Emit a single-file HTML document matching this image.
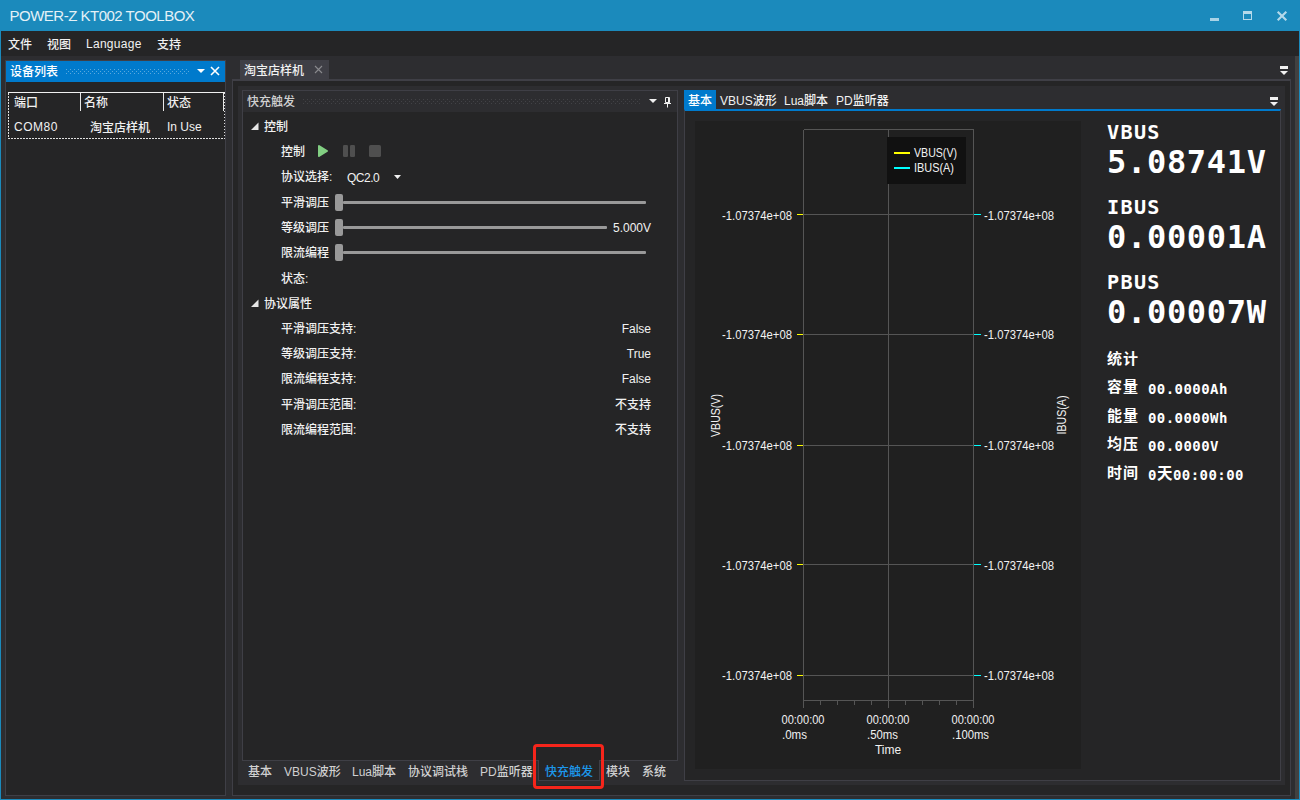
<!DOCTYPE html>
<html lang="zh-CN">
<head>
<meta charset="utf-8">
<title>POWER-Z KT002 TOOLBOX</title>
<style>
*{box-sizing:border-box;margin:0;padding:0}
html,body{width:1300px;height:800px;overflow:hidden;background:#2d2d30}
body{position:relative;font-family:"Liberation Sans","Noto Sans CJK SC",sans-serif;font-size:12px;color:#f1f1f1;line-height:16px;font-weight:500}
.abs{position:absolute}
.t{position:absolute;white-space:nowrap;line-height:16px;height:16px}
.mono{font-family:"DejaVu Sans Mono","Liberation Mono","Noto Sans CJK SC",monospace;font-weight:bold;color:#fff}
#title{left:0;top:0;width:1300px;height:31px;background:#1b8abc}
#menubar{left:1px;top:31px;width:1298px;height:25px;background:#252526}
.bl{background:#1b8abc}
.bd{background:#3f3f46}
.dk{background:#252526}
</style>
</head>
<body>
<!-- window frame -->
<div class="abs" id="title"></div>
<div class="abs bl" style="left:0;top:0;width:1px;height:800px"></div>
<div class="abs bl" style="left:1299px;top:0;width:1px;height:800px"></div>
<div class="abs bl" style="left:0;top:799px;width:1300px;height:1px"></div>
<div class="abs" id="menubar"></div>
<div class="abs" style="left:1295px;top:56px;width:4px;height:743px;background:#414141"></div>

<div class="t" id="ttl" style="left:9.5px;font-weight:400;top:7px;font-size:15px;line-height:18px;height:18px;color:#e4f1f7;letter-spacing:-0.5px">POWER-Z KT002 TOOLBOX</div>
<!-- window buttons -->
<svg class="abs" style="left:1200px;top:0" width="100" height="31" viewBox="0 0 100 31">
  <rect x="10" y="18" width="9" height="3" fill="#a9d3e6"/>
  <rect x="43.5" y="11.5" width="8" height="8" fill="none" stroke="#b4d9ea" stroke-width="1"/>
  <rect x="43" y="11" width="9" height="3" fill="#b4d9ea"/>
  <path d="M77.7 11.7 L86.3 20.3 M86.3 11.7 L77.7 20.3" stroke="#b4d9ea" stroke-width="2.1" fill="none"/>
</svg>

<!-- menu -->
<div class="t" style="left:8px;top:37px">文件</div>
<div class="t" style="left:47px;top:37px">视图</div>
<div class="t" style="left:86px;top:36px;letter-spacing:0.28px" id="mlang">Language</div>
<div class="t" style="left:157px;top:37px">支持</div>

<!-- LEFT PANEL -->
<div class="abs" style="left:5px;top:60px;width:221px;height:736px;background:#252526;border:1px solid #3f3f46"></div>
<div class="abs" style="left:6px;top:61px;width:219px;height:21px;background:#007acc"></div>
<div class="t" style="left:10px;top:64px;color:#fff">设备列表</div>
<svg class="abs" style="left:66px;top:69px" width="124" height="5">
  <defs><pattern id="dp1" width="4" height="4" patternUnits="userSpaceOnUse"><rect x="0" y="0" width="1" height="1" fill="#59a8de"/><rect x="2" y="2" width="1" height="1" fill="#59a8de"/></pattern></defs>
  <rect width="124" height="5" fill="url(#dp1)"/>
</svg>
<svg class="abs" style="left:195px;top:64px" width="30" height="16" viewBox="0 0 30 16">
  <path d="M2 5 H10 L6 9 Z" fill="#fff"/>
  <path d="M16 3 L24 11 M24 3 L16 11" stroke="#fff" stroke-width="1.6" fill="none"/>
</svg>
<!-- table -->
<svg class="abs" style="left:8px;top:92px" width="217" height="47" viewBox="0 0 217 47"><path d="M0.5 1 V46.5 H216.5 V1" fill="none" stroke="#e0e0e0" stroke-width="1" stroke-dasharray="1.5 1.5" shape-rendering="crispEdges"/></svg>
<div class="abs" style="left:8px;top:92px;width:217px;height:1px;background:#f1f1f1"></div>
<div class="abs" style="left:80px;top:93px;width:1px;height:18px;background:#e8e8e8"></div>
<div class="abs" style="left:163px;top:93px;width:1px;height:18px;background:#e8e8e8"></div>
<div class="abs" style="left:223px;top:93px;width:1px;height:18px;background:#e8e8e8"></div>
<div class="t" style="left:14px;top:95px">端口</div>
<div class="t" style="left:84px;top:95px">名称</div>
<div class="t" style="left:167px;top:95px">状态</div>
<div class="t" style="left:14px;top:119px;letter-spacing:0.5px">COM80</div>
<div class="t" style="left:90px;top:120px">淘宝店样机</div>
<div class="t" style="left:167px;top:119px">In Use</div>

<!-- DOCUMENT AREA -->
<div class="abs" style="left:240px;top:60px;width:89px;height:20px;background:#3f3f46"></div>
<div class="t" style="left:244px;top:63px">淘宝店样机</div>
<svg class="abs" style="left:312px;top:63px" width="14" height="14" viewBox="0 0 14 14"><path d="M3 3 L10 10 M10 3 L3 10" stroke="#8a8a8e" stroke-width="1.1" fill="none"/></svg>
<svg class="abs" style="left:1279px;top:65px" width="11" height="12" viewBox="0 0 11 12"><rect x="1" y="1" width="8" height="3" fill="#f1f1f1"/><path d="M1 6 H9 L5 10 Z" fill="#f1f1f1"/></svg>
<div class="abs" style="left:232px;top:79px;width:1059px;height:717px;background:#252526;border:1px solid #3f3f46;border-top-width:2px"></div>
<div class="abs" style="left:238px;top:86px;width:1047px;height:699px;background:#2d2d30"></div>

<!-- QUICK CHARGE PANEL -->
<div class="abs" style="left:242px;top:90px;width:436px;height:671px;background:#252526;border:1px solid #3f3f46"></div>
<div class="abs" style="left:243px;top:91px;width:434px;height:21px;background:#2d2d30"></div>
<div class="t" style="left:247px;top:94px;color:#d0d0d0">快充触发</div>
<svg class="abs" style="left:303px;top:99px" width="338" height="5">
  <defs><pattern id="dp2" width="4" height="4" patternUnits="userSpaceOnUse"><rect x="0" y="0" width="1" height="1" fill="#424246"/><rect x="2" y="2" width="1" height="1" fill="#424246"/></pattern></defs>
  <rect width="338" height="5" fill="url(#dp2)"/>
</svg>
<svg class="abs" style="left:647px;top:94px" width="28" height="16" viewBox="0 0 28 16">
  <path d="M2 5 H10 L6 9 Z" fill="#f1f1f1"/>
  <path d="M18.5 3.5 H22.5 V8.5 H18.5 Z M17 9.5 H24 M20.5 10 V13.5" stroke="#f1f1f1" stroke-width="1" fill="none"/>
  <rect x="21" y="4" width="1.5" height="5" fill="#f1f1f1"/>
</svg>

<!-- group 1 -->
<svg class="abs" style="left:250px;top:122px" width="9" height="9" viewBox="0 0 9 9"><path d="M8.5 0.5 V8 H1 Z" fill="#e6e6e6"/></svg>
<div class="t" style="left:264px;top:119px">控制</div>
<div class="t" style="left:281px;top:144px">控制</div>
<svg class="abs" style="left:315px;top:143px" width="70" height="16" viewBox="0 0 70 16">
  <path d="M4 3 L12 8 L4 13 Z" fill="#82cf82" stroke="#82cf82" stroke-width="2" stroke-linejoin="round"/>
  <rect x="28" y="2" width="5" height="12" rx="1.3" fill="#4f4f4f"/><rect x="35" y="2" width="5" height="12" rx="1.3" fill="#4f4f4f"/>
  <rect x="54" y="2" width="12" height="12" rx="1.6" fill="#4f4f4f"/>
</svg>
<div class="t" style="left:281px;top:169px">协议选择:</div>
<div class="t" style="left:347px;top:170px;letter-spacing:-0.5px">QC2.0</div>
<svg class="abs" style="left:393px;top:174px" width="9" height="6" viewBox="0 0 9 6"><path d="M1 1 H8 L4.5 5 Z" fill="#f1f1f1"/></svg>

<div class="t" style="left:281px;top:195px">平滑调压</div>
<div class="t" style="left:281px;top:220px">等级调压</div>
<div class="t" style="left:281px;top:245px">限流编程</div>
<div class="t" style="left:281px;top:271px">状态:</div>
<!-- sliders -->
<div class="abs" style="left:343px;top:201px;width:303px;height:3px;background:#999;border-radius:1px"></div>
<div class="abs" style="left:335px;top:194px;width:8px;height:17px;background:#999;border-radius:2px"></div>
<div class="abs" style="left:343px;top:226px;width:264px;height:3px;background:#999;border-radius:1px"></div>
<div class="abs" style="left:335px;top:219px;width:8px;height:17px;background:#999;border-radius:2px"></div>
<div class="abs" style="left:343px;top:251px;width:303px;height:3px;background:#999;border-radius:1px"></div>
<div class="abs" style="left:335px;top:244px;width:8px;height:17px;background:#999;border-radius:2px"></div>
<div class="t" style="left:551px;width:100px;text-align:right;top:220px">5.000V</div>

<!-- group 2 -->
<svg class="abs" style="left:250px;top:299px" width="9" height="9" viewBox="0 0 9 9"><path d="M8.5 0.5 V8 H1 Z" fill="#e6e6e6"/></svg>
<div class="t" style="left:264px;top:296px">协议属性</div>
<div class="t" style="left:281px;top:321px">平滑调压支持:</div>
<div class="t" style="left:281px;top:346px">等级调压支持:</div>
<div class="t" style="left:281px;top:371px">限流编程支持:</div>
<div class="t" style="left:281px;top:397px">平滑调压范围:</div>
<div class="t" style="left:281px;top:422px">限流编程范围:</div>
<div class="t" style="left:551px;width:100px;text-align:right;top:321px">False</div>
<div class="t" style="left:551px;width:100px;text-align:right;top:346px">True</div>
<div class="t" style="left:551px;width:100px;text-align:right;top:371px">False</div>
<div class="t" style="left:551px;width:100px;text-align:right;top:397px">不支持</div>
<div class="t" style="left:551px;width:100px;text-align:right;top:422px">不支持</div>

<!-- bottom tabs -->
<div class="abs" style="left:538px;top:760px;width:62px;height:21px;background:#252526;border:1px solid #3f3f46;border-top:none"></div>
<div class="t" style="left:248px;top:764px;color:#d0d0d0">基本</div>
<div class="t" style="left:284px;top:764px;color:#d0d0d0">VBUS波形</div>
<div class="t" style="left:352px;top:764px;color:#d0d0d0">Lua脚本</div>
<div class="t" style="left:408px;top:764px;color:#d0d0d0">协议调试栈</div>
<div class="t" style="left:480px;top:764px;color:#d0d0d0">PD监听器</div>
<div class="t" style="left:545px;top:764px;color:#1c97ea">快充触发</div>
<div class="t" style="left:606px;top:764px;color:#d0d0d0">模块</div>
<div class="t" style="left:642px;top:764px;color:#d0d0d0">系统</div>
<div class="abs" style="left:533px;top:744px;width:71px;height:45px;border:3px solid #f6251b;border-radius:4px"></div>

<!-- RIGHT PANEL -->
<div class="abs" style="left:684px;top:109px;width:597px;height:672px;background:#252526;border:1px solid #3f3f46;border-top:2px solid #007acc"></div>
<div class="abs" style="left:684px;top:90px;width:32px;height:19px;background:#007acc"></div>
<div class="t" style="left:688px;top:93px;color:#fff">基本</div>
<div class="t" style="left:720px;top:93px">VBUS波形</div>
<div class="t" style="left:784px;top:93px">Lua脚本</div>
<div class="t" style="left:836px;top:93px">PD监听器</div>
<svg class="abs" style="left:1269px;top:96px" width="11" height="12" viewBox="0 0 11 12"><rect x="1" y="1" width="8" height="3" fill="#f1f1f1"/><path d="M1 6 H9 L5 10 Z" fill="#f1f1f1"/></svg>

<!-- chart -->
<svg class="abs" style="left:695px;top:121px" width="386" height="648" viewBox="695 121 386 648" font-family="Liberation Sans, sans-serif" font-size="12" fill="#f1f1f1">
  <rect x="695" y="121" width="386" height="648" fill="#202020"/>
  <g stroke="#555" stroke-width="1" fill="none" shape-rendering="crispEdges">
    <path d="M803.5 129.5 H973.5 V708 M803.5 129.5 V708 M888.5 129.5 V708 M803.5 700.5 H973.5"/>
    <path d="M803.5 214.5 H973.5 M803.5 334.5 H973.5 M803.5 445.5 H973.5 M803.5 564.5 H973.5 M803.5 675.5 H973.5"/>
    <path d="M820.5 700 V705 M837.5 700 V705 M854.5 700 V705 M871.5 700 V705 M905.5 700 V705 M922.5 700 V705 M939.5 700 V705 M956.5 700 V705"/>
  </g>
  <rect x="887" y="137" width="79" height="47" fill="#111"/>
  <g shape-rendering="crispEdges">
    <rect x="894" y="152" width="16" height="2" fill="#ffff00"/>
    <rect x="894" y="167" width="16" height="2" fill="#00ffff"/>
    <g fill="#ffff00">
      <rect x="797" y="214" width="6" height="1"/><rect x="797" y="334" width="6" height="1"/><rect x="797" y="445" width="6" height="1"/><rect x="797" y="564" width="6" height="1"/><rect x="797" y="675" width="6" height="1"/>
    </g>
    <g fill="#00ffff">
      <rect x="974" y="214" width="7" height="1"/><rect x="974" y="334" width="7" height="1"/><rect x="974" y="445" width="7" height="1"/><rect x="974" y="564" width="7" height="1"/><rect x="974" y="675" width="7" height="1"/>
    </g>
  </g>
  <text x="914" y="157" textLength="43" lengthAdjust="spacingAndGlyphs">VBUS(V)</text>
  <text x="914" y="172" textLength="40" lengthAdjust="spacingAndGlyphs">IBUS(A)</text>
  <g text-anchor="end">
    <text x="792" y="220" textLength="70" lengthAdjust="spacingAndGlyphs">-1.07374e+08</text>
    <text x="792" y="339" textLength="70" lengthAdjust="spacingAndGlyphs">-1.07374e+08</text>
    <text x="792" y="450" textLength="70" lengthAdjust="spacingAndGlyphs">-1.07374e+08</text>
    <text x="792" y="570" textLength="70" lengthAdjust="spacingAndGlyphs">-1.07374e+08</text>
    <text x="792" y="680" textLength="70" lengthAdjust="spacingAndGlyphs">-1.07374e+08</text>
  </g>
  <g>
    <text x="984" y="220" textLength="70" lengthAdjust="spacingAndGlyphs">-1.07374e+08</text>
    <text x="984" y="339" textLength="70" lengthAdjust="spacingAndGlyphs">-1.07374e+08</text>
    <text x="984" y="450" textLength="70" lengthAdjust="spacingAndGlyphs">-1.07374e+08</text>
    <text x="984" y="570" textLength="70" lengthAdjust="spacingAndGlyphs">-1.07374e+08</text>
    <text x="984" y="680" textLength="70" lengthAdjust="spacingAndGlyphs">-1.07374e+08</text>
  </g>
  <g text-anchor="middle">
    <text x="803" y="724" textLength="43" lengthAdjust="spacingAndGlyphs">00:00:00</text>
    <text x="888" y="724" textLength="43" lengthAdjust="spacingAndGlyphs">00:00:00</text>
    <text x="973" y="724" textLength="43" lengthAdjust="spacingAndGlyphs">00:00:00</text>
    <text x="888" y="754">Time</text>
  </g>
  <text x="782" y="739" textLength="25" lengthAdjust="spacingAndGlyphs">.0ms</text>
  <text x="867" y="739" textLength="31" lengthAdjust="spacingAndGlyphs">.50ms</text>
  <text x="952" y="739" textLength="37" lengthAdjust="spacingAndGlyphs">.100ms</text>
  <text transform="translate(719.5 415.5) rotate(-90)" text-anchor="middle" textLength="43" lengthAdjust="spacingAndGlyphs">VBUS(V)</text>
  <text transform="translate(1066 415) rotate(-90)" text-anchor="middle" textLength="39" lengthAdjust="spacingAndGlyphs">IBUS(A)</text>
</svg>

<!-- readouts -->
<div class="t mono" style="left:1107px;top:119px;font-size:20.2px;letter-spacing:1.3px;line-height:26px;height:26px">VBUS</div>
<div class="t mono" style="left:1107px;top:142px;font-size:32px;letter-spacing:0.7px;line-height:40px;height:40px">5.08741V</div>
<div class="t mono" style="left:1107px;top:194px;font-size:20.2px;letter-spacing:1.3px;line-height:26px;height:26px">IBUS</div>
<div class="t mono" style="left:1107px;top:217px;font-size:32px;letter-spacing:0.7px;line-height:40px;height:40px">0.00001A</div>
<div class="t mono" style="left:1107px;top:269px;font-size:20.2px;letter-spacing:1.3px;line-height:26px;height:26px">PBUS</div>
<div class="t mono" style="left:1107px;top:292px;font-size:32px;letter-spacing:0.7px;line-height:40px;height:40px">0.00007W</div>
<div class="t" style="left:1107px;top:348px;font-size:15px;letter-spacing:1px;line-height:22px;height:22px;font-weight:bold;color:#fff">统计</div>
<div class="t" style="left:1107px;top:376px;font-size:15px;letter-spacing:1px;line-height:22px;height:22px;font-weight:bold;color:#fff">容量</div>
<div class="t" style="left:1107px;top:405px;font-size:15px;letter-spacing:1px;line-height:22px;height:22px;font-weight:bold;color:#fff">能量</div>
<div class="t" style="left:1107px;top:433px;font-size:15px;letter-spacing:1px;line-height:22px;height:22px;font-weight:bold;color:#fff">均压</div>
<div class="t" style="left:1107px;top:462px;font-size:15px;letter-spacing:1px;line-height:22px;height:22px;font-weight:bold;color:#fff">时间</div>
<div class="t mono" style="left:1148px;top:379px;font-size:14px;letter-spacing:0.44px;line-height:20px;height:20px">00.0000Ah</div>
<div class="t mono" style="left:1148px;top:408px;font-size:14px;letter-spacing:0.44px;line-height:20px;height:20px">00.0000Wh</div>
<div class="t mono" style="left:1148px;top:436px;font-size:14px;letter-spacing:0.44px;line-height:20px;height:20px">00.0000V</div>
<div class="t mono" style="left:1148px;top:465px;font-size:14px;letter-spacing:0.44px;line-height:20px;height:20px">0<span style="font-size:15.5px;letter-spacing:0;position:relative;top:-1.5px;margin-right:0.6px">天</span>00:00:00</div>
</body>
</html>
